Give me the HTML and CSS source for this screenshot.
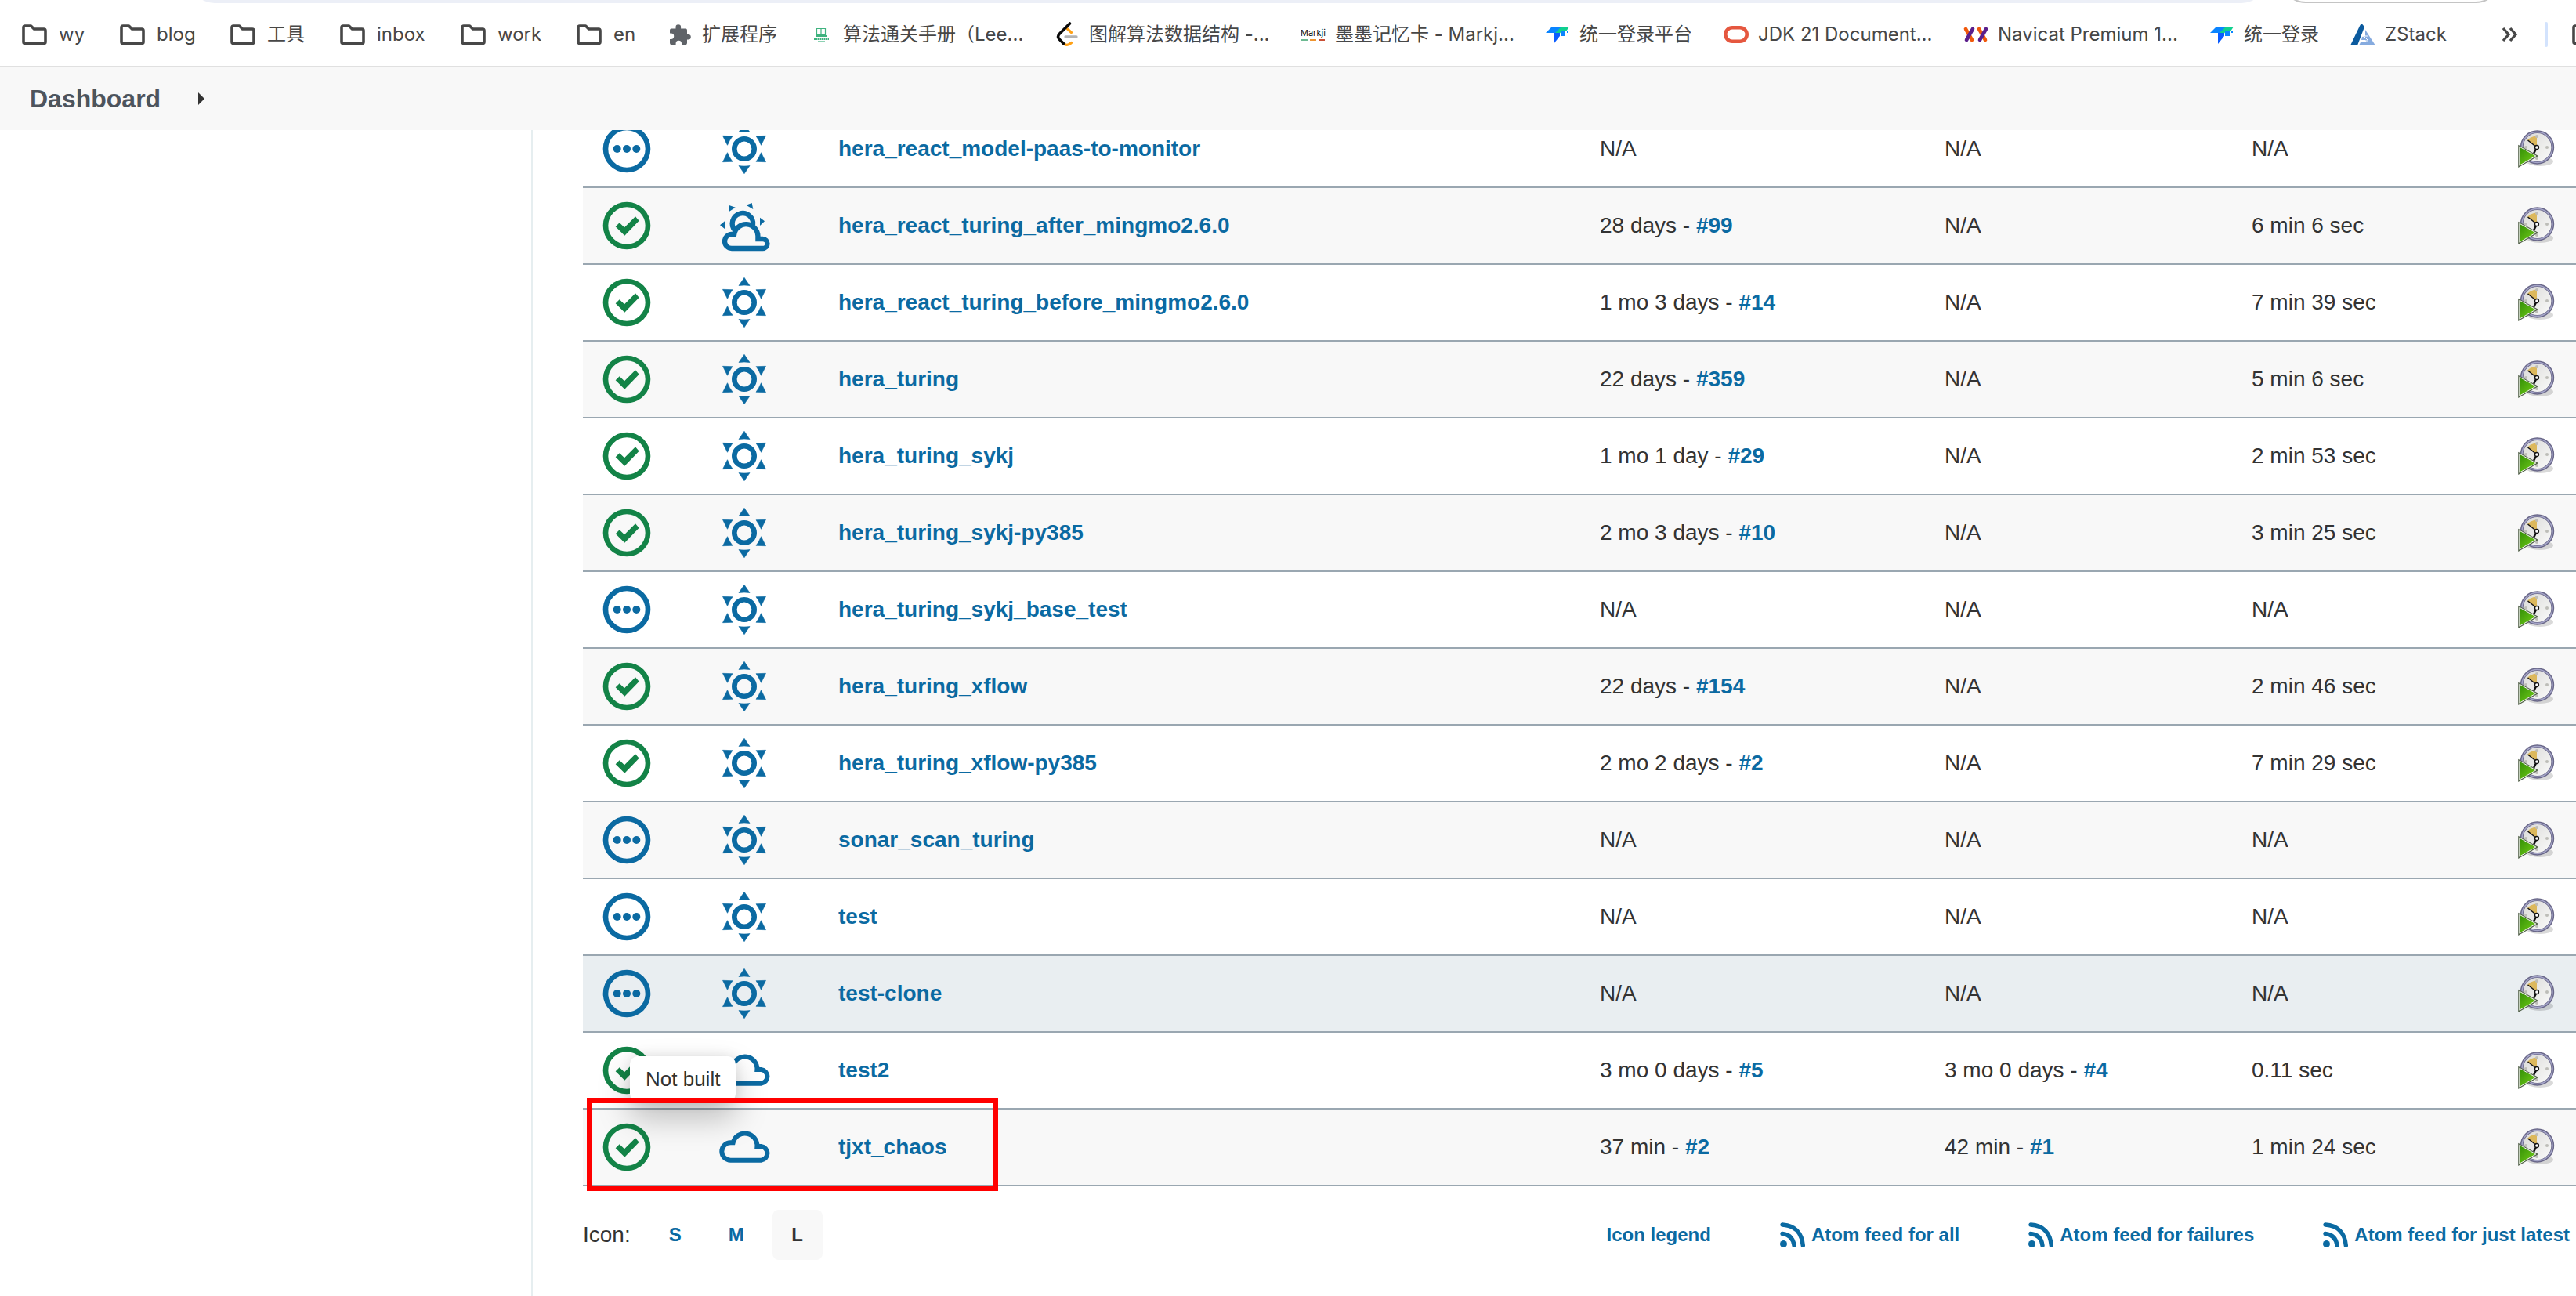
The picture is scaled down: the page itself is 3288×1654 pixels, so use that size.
FILE: index.html
```html
<!DOCTYPE html>
<html lang="en">
<head>
<meta charset="utf-8">
<title>Dashboard [Jenkins]</title>
<link rel="stylesheet" href="styles.css">
</head>
<body>
<svg class="sprite" aria-hidden="true">
  <symbol id="folder" viewBox="0 0 34 32"><path d="M3 7a2 2 0 0 1 2-2h7.500l4 4H29a2 2 0 0 1 2 2v14.500a2 2 0 0 1-2 2H5a2 2 0 0 1-2-2z" fill="none" stroke="#474747" stroke-width="3.600" stroke-linejoin="round"/></symbol>
  <symbol id="tencent" viewBox="0 0 32 32"><path d="M1 14 9 6h13l-8 8z" fill="#0a84ff"/><path d="M13 14 21 6h10l-4 6h-6l-3 4z" fill="#0fd08f"/><path d="M11 14h8v4l-8 10z" fill="#0a5cff"/><path d="M20 12h6v6h-6z" fill="#0a84ff"/><path d="M28 11h2v3h-2z" fill="#0a84ff"/></symbol>
  <symbol id="ok" viewBox="-32 -32 64 64"><circle r="27" fill="none" stroke="#138347" stroke-width="6.600"/><path d="M-14.300 1.300-9.300-3.700-3 2.300 11-11.700l4.700 5.400L-2.700 12.700z" fill="#138347"/></symbol>
  <symbol id="notbuilt" viewBox="-32 -32 64 64"><g fill="#0b6aa2"><circle r="27" fill="none" stroke="#0b6aa2" stroke-width="6.600"/><circle cx="-12.300" r="5"/><circle r="5"/><circle cx="12.300" r="5"/></g></symbol>
  <symbol id="sun" viewBox="-34 -34 68 68"><g fill="#0b6aa2"><circle r="12.700" fill="none" stroke="#0b6aa2" stroke-width="6.600"/><path stroke="#0b6aa2" stroke-width=".6" d="M0-31.700 7-21.500Q0-22.500-7-21.500zM0 31.700 7 21.500Q0 22.500-7 21.500zM-27.500-16.700-15-16.300Q-19-11-21.500-4.700zM27.500-16.700 15-16.300Q19-11 21.500-4.700zM-27.500 16.700-15 16.300Q-19 11-21.500 4.700zM27.500 16.700 15 16.300Q19 11 21.500 4.700z"/></g></symbol>
  <symbol id="partly" viewBox="-34 -34 68 68"><g fill="none" stroke="#0b6aa2" stroke-width="6.300"><path d="M-12 6A13.200 13.200 0 1 1 11-1"/><path d="M-16 29A9 9 0 0 1-16 11H-12.800A15.200 15.200 0 0 1 17.400 13V17H23.500A6 6 0 0 1 23.500 29z"/></g><path fill="#0b6aa2" d="m-19.300-26 8 2.700-7.700 5zM2.300-26.300 9.700-29l1.600 8zM-31-.7l6.300-5.300V4.300zM20-10.300l6 4.600L20 0z"/></symbol>
  <symbol id="cloud" viewBox="-34 -34 68 68"><path d="M-17.500 16.700A11 11 0 0 1-17.500-5.700H-14.300A15.600 15.600 0 0 1 16.400-1H21.500A8.900 8.900 0 0 1 21.500 16.700z" fill="none" stroke="#0b6aa2" stroke-width="6"/></symbol>
  <symbol id="clock" viewBox="0 0 48 48">
    <defs><linearGradient id="play" x1="0" y1="0" x2="1" y2="1"><stop offset="0" stop-color="#2f8a06"/><stop offset="1" stop-color="#7ad61a"/></linearGradient><linearGradient id="face" x1="0" y1="0" x2="1" y2="1"><stop offset="0" stop-color="#d8d8d6"/><stop offset="1" stop-color="#fcfcfb"/></linearGradient></defs>
    <ellipse cx="28" cy="40" rx="17" ry="6" fill="#00000026"/>
    <circle cx="24.500" cy="22" r="19.800" fill="url(#face)" stroke="#6a6889" stroke-width="3.800"/>
    <circle cx="24.500" cy="22" r="19.500" fill="none" stroke="#a4a4c8" stroke-width="1.500"/>
    <path d="M24 21 12 13q4-5 12-5.500z" fill="#dcb85c"/>
    <g fill="#bdbdb8"><circle cx="24" cy="8" r="2"/><circle cx="37" cy="22" r="2"/><circle cx="10" cy="22" r="2"/><circle cx="24" cy="36" r="2"/></g>
    <path d="M12.500 13 24 22" stroke="#111" stroke-width="1.500"/><path d="M24 22 20 30" stroke="#111" stroke-width="2.500"/>
    <circle cx="24" cy="22" r="2.500" fill="#fff" stroke="#111" stroke-width="1.300"/>
    <path d="M1 20v26.500L24.500 33z" fill="url(#play)" stroke="#55634d" stroke-width="1.600"/><path d="M1.800 21.200v24L22.800 33z" fill="none" stroke="#f4f8f0" stroke-width="1"/>
  </symbol>
  <symbol id="rss" viewBox="0 0 32 32"><circle cx="4.500" cy="27.500" r="4.500" fill="#0b6aa2"/><path d="M3 14.500C12 15.500 17 20.500 18 29.500M3 3C19 4 28 13.500 29.300 29.500" fill="none" stroke="#0b6aa2" stroke-width="5.400" stroke-linecap="round"/></symbol>
</svg>

<header>
  <div class="toolbar"><div class="omnibox"></div><div class="profile"></div></div>
  <nav class="bookmarks" aria-label="Bookmarks">
    <a class="folder" href="#"><svg><use href="#folder"/></svg>wy</a>
    <a class="folder" href="#"><svg><use href="#folder"/></svg>blog</a>
    <a class="folder" href="#"><svg><use href="#folder"/></svg>工具</a>
    <a class="folder" href="#"><svg><use href="#folder"/></svg>inbox</a>
    <a class="folder" href="#"><svg><use href="#folder"/></svg>work</a>
    <a class="folder" href="#"><svg><use href="#folder"/></svg>en</a>
    <a href="#"><svg viewBox="0 0 32 32"><path d="M3 10.500a2 2 0 0 1 2-2h5.500V6.500a3.300 3.300 0 0 1 6.600 0v2H23a2 2 0 0 1 2 2v5.500h1.500a3.300 3.300 0 0 1 0 6.600H25V27a2 2 0 0 1-2 2h-5v-1.500a3.700 3.700 0 0 0-7.400 0V29H5a2 2 0 0 1-2-2v-5h1.500a3.700 3.700 0 0 0 0-7.400H3z" fill="#5f6368"/></svg>扩展程序</a>
    <a href="#"><svg viewBox="0 0 32 32"><g fill="none" stroke="#3fb37f"><path d="M10.500 8.500h5.500v8h-5.500zM16 8.500h5.500v8H16z" stroke-width="1.200"/><path d="M9 18h14" stroke-width="2"/><path d="M7 22h19" stroke-width="2" stroke-dasharray="2 .5"/><path d="M12 25h9" stroke-width="1.200"/></g></svg>算法通关手册（Lee...</a>
    <a href="#"><svg viewBox="0 0 32 32"><g fill="none" stroke-linecap="round"><path d="M15 7.500l6.500 6M10 26c4 5 8 4 11.500.500" stroke="#ffa116" stroke-width="3.300"/><path d="M19.500 2 6.500 15c-2.500 2.500-2.500 5 0 7.500l5 5" stroke="#0a0a0a" stroke-width="3.600"/><path d="M14 19h14" stroke="#b3b3b3" stroke-width="3.300"/></g></svg>图解算法数据结构 -...</a>
    <a href="#"><svg viewBox="0 0 32 32"><text x="0" y="18" font-size="11" fill="#111">Markji</text><path d="M1 23h8" stroke="#6dba92" stroke-width="2"/><path d="M12 23h8" stroke="#ee9430" stroke-width="2"/><path d="M23 23h8" stroke="#c94f35" stroke-width="2"/></svg>墨墨记忆卡 - Markj...</a>
    <a href="#"><svg><use href="#tencent"/></svg>统一登录平台</a>
    <a href="#"><svg viewBox="0 0 32 32"><rect x="2.300" y="7.300" width="27.400" height="17.400" rx="8.700" fill="none" stroke="#e5573f" stroke-width="4.600"/></svg>JDK 21 Document...</a>
    <a href="#"><svg viewBox="0 0 32 32"><g stroke-width="4.600" stroke-linecap="round"><path d="M3 9l8 14" stroke="#f0590c"/><path d="M12 9 4 23" stroke="#5a1e8c"/><path d="M20 9l8 14" stroke="#f0590c"/><path d="M29 9l-8 14" stroke="#5a1e8c"/></g></svg>Navicat Premium 1...</a>
    <a href="#"><svg><use href="#tencent"/></svg>统一登录</a>
    <a href="#"><svg viewBox="0 0 32 32"><path d="M12 5q2-5 5 0v4L9 30H0z" fill="#0b5a9e"/><path d="M19 10 32 30H11l2-4h8l-2-3h-5l1-4 4-1z" fill="#86abdf"/><path d="M16 18h6m-9 6h10l-5-5" fill="none" stroke="#fff" stroke-width="1"/></svg>ZStack</a>
    <button type="button" aria-label="More bookmarks"><svg viewBox="0 0 32 32"><path d="M3 8l7 8-7 8M12 8l7 8-7 8" fill="none" stroke="#474747" stroke-width="3.400"/></svg></button>
    <span class="divider"></span>
    <a class="folder" href="#" aria-label="All bookmarks"><svg><use href="#folder"/></svg></a>
  </nav>
</header>

<nav class="breadcrumbs" aria-label="Breadcrumbs"><a href="#">Dashboard</a><svg viewBox="0 0 8 16"><path d="M0 0l8 8-8 8z" fill="#333"/></svg></nav>

<div class="page">
  <aside></aside>
  <main>
    <div class="jobs">
      <table>
        <colgroup><col class="c-status"><col class="c-weather"><col><col class="c-success"><col class="c-failure"><col class="c-duration"><col class="c-run"></colgroup>
        <tbody>
          <tr><td><svg><use href="#notbuilt"/></svg></td><td><svg class="w"><use href="#sun"/></svg></td><td><a href="#">hera_react_model-paas-to-monitor</a></td><td>N/A</td><td>N/A</td><td>N/A</td><td><button type="button" aria-label="Schedule a build"><svg><use href="#clock"/></svg></button></td></tr>
          <tr><td><svg><use href="#ok"/></svg></td><td><svg class="w"><use href="#partly"/></svg></td><td><a href="#">hera_react_turing_after_mingmo2.6.0</a></td><td>28 days - <a href="#">#99</a></td><td>N/A</td><td>6 min 6 sec</td><td><button type="button" aria-label="Schedule a build"><svg><use href="#clock"/></svg></button></td></tr>
          <tr><td><svg><use href="#ok"/></svg></td><td><svg class="w"><use href="#sun"/></svg></td><td><a href="#">hera_react_turing_before_mingmo2.6.0</a></td><td>1 mo 3 days - <a href="#">#14</a></td><td>N/A</td><td>7 min 39 sec</td><td><button type="button" aria-label="Schedule a build"><svg><use href="#clock"/></svg></button></td></tr>
          <tr><td><svg><use href="#ok"/></svg></td><td><svg class="w"><use href="#sun"/></svg></td><td><a href="#">hera_turing</a></td><td>22 days - <a href="#">#359</a></td><td>N/A</td><td>5 min 6 sec</td><td><button type="button" aria-label="Schedule a build"><svg><use href="#clock"/></svg></button></td></tr>
          <tr><td><svg><use href="#ok"/></svg></td><td><svg class="w"><use href="#sun"/></svg></td><td><a href="#">hera_turing_sykj</a></td><td>1 mo 1 day - <a href="#">#29</a></td><td>N/A</td><td>2 min 53 sec</td><td><button type="button" aria-label="Schedule a build"><svg><use href="#clock"/></svg></button></td></tr>
          <tr><td><svg><use href="#ok"/></svg></td><td><svg class="w"><use href="#sun"/></svg></td><td><a href="#">hera_turing_sykj-py385</a></td><td>2 mo 3 days - <a href="#">#10</a></td><td>N/A</td><td>3 min 25 sec</td><td><button type="button" aria-label="Schedule a build"><svg><use href="#clock"/></svg></button></td></tr>
          <tr><td><svg><use href="#notbuilt"/></svg></td><td><svg class="w"><use href="#sun"/></svg></td><td><a href="#">hera_turing_sykj_base_test</a></td><td>N/A</td><td>N/A</td><td>N/A</td><td><button type="button" aria-label="Schedule a build"><svg><use href="#clock"/></svg></button></td></tr>
          <tr><td><svg><use href="#ok"/></svg></td><td><svg class="w"><use href="#sun"/></svg></td><td><a href="#">hera_turing_xflow</a></td><td>22 days - <a href="#">#154</a></td><td>N/A</td><td>2 min 46 sec</td><td><button type="button" aria-label="Schedule a build"><svg><use href="#clock"/></svg></button></td></tr>
          <tr><td><svg><use href="#ok"/></svg></td><td><svg class="w"><use href="#sun"/></svg></td><td><a href="#">hera_turing_xflow-py385</a></td><td>2 mo 2 days - <a href="#">#2</a></td><td>N/A</td><td>7 min 29 sec</td><td><button type="button" aria-label="Schedule a build"><svg><use href="#clock"/></svg></button></td></tr>
          <tr><td><svg><use href="#notbuilt"/></svg></td><td><svg class="w"><use href="#sun"/></svg></td><td><a href="#">sonar_scan_turing</a></td><td>N/A</td><td>N/A</td><td>N/A</td><td><button type="button" aria-label="Schedule a build"><svg><use href="#clock"/></svg></button></td></tr>
          <tr><td><svg><use href="#notbuilt"/></svg></td><td><svg class="w"><use href="#sun"/></svg></td><td><a href="#">test</a></td><td>N/A</td><td>N/A</td><td>N/A</td><td><button type="button" aria-label="Schedule a build"><svg><use href="#clock"/></svg></button></td></tr>
          <tr class="active"><td><svg><use href="#notbuilt"/></svg></td><td><svg class="w"><use href="#sun"/></svg></td><td><a href="#">test-clone</a></td><td>N/A</td><td>N/A</td><td>N/A</td><td><button type="button" aria-label="Schedule a build"><svg><use href="#clock"/></svg></button></td></tr>
          <tr><td><svg><use href="#ok"/></svg></td><td><svg class="w"><use href="#cloud"/></svg></td><td><a href="#">test2</a></td><td>3 mo 0 days - <a href="#">#5</a></td><td>3 mo 0 days - <a href="#">#4</a></td><td>0.11 sec</td><td><button type="button" aria-label="Schedule a build"><svg><use href="#clock"/></svg></button></td></tr>
          <tr><td><svg><use href="#ok"/></svg></td><td><svg class="w"><use href="#cloud"/></svg></td><td><a href="#">tjxt_chaos</a></td><td>37 min - <a href="#">#2</a></td><td>42 min - <a href="#">#1</a></td><td>1 min 24 sec</td><td><button type="button" aria-label="Schedule a build"><svg><use href="#clock"/></svg></button></td></tr>
        </tbody>
      </table>
      <div class="tooltip" role="tooltip">Not built</div>
      <div class="highlight"></div>
    </div>
    <footer>
      <div class="sizes"><span>Icon:</span><div class="choices"><button type="button">S</button><button type="button">M</button><button type="button" class="selected">L</button></div></div>
      <div class="feeds"><a href="#">Icon legend</a><a href="#"><svg><use href="#rss"/></svg>Atom feed for all</a><a href="#"><svg><use href="#rss"/></svg>Atom feed for failures</a><a href="#"><svg><use href="#rss"/></svg>Atom feed for just latest</a></div>
    </footer>
  </main>
</div>
</body>
</html>
```
FILE: styles.css
```css
* { box-sizing: border-box; }

body {
  margin: 0;
  min-height: 100vh;
  display: flex;
  flex-direction: column;
  background: #fff;
  color: #333;
  font: 28px/36px "Liberation Sans", Arial, sans-serif;
}

a { color: #0b6aa2; font-weight: bold; text-decoration: none; }
button { display: block; border: 0; padding: 0; background: none; font: inherit; color: inherit; }
svg { display: block; flex: none; overflow: visible; }
.sprite { position: absolute; width: 0; height: 0; }

/* browser chrome */
header { border-bottom: 2px solid #e0e0e0; overflow: hidden; }
.toolbar {
  display: flex;
  align-items: flex-end;
  gap: 18px;
  height: 4px;
  overflow: hidden;
  padding: 0 96px 0 242px;
}
.omnibox { flex: 1; height: 64px; border-radius: 32px; background: #eceff7; }
.profile { width: 281px; height: 64px; border: 2px solid #c4c4c4; border-radius: 32px; }
.bookmarks {
  display: grid;
  grid-template-columns: 125px 141px 140px 154px 148px 117px 180px 314px 314px 312px 228px 306px 314px 180px 192px 56px 34px 34px;
  align-items: center;
  height: 80px;
  padding-left: 27px;
  font: 24px/32px Inter, "Noto Sans CJK SC", sans-serif;
}
.bookmarks a {
  display: flex;
  align-items: center;
  gap: 12px;
  color: #474747;
  font-weight: normal;
  white-space: nowrap;
}
.bookmarks .folder { gap: 14px; }
.bookmarks svg { width: 32px; height: 32px; }
.bookmarks .folder svg { width: 34px; }
.divider { width: 4px; height: 32px; border-radius: 2px; background: #d3e3fd; }

.breadcrumbs {
  display: flex;
  align-items: center;
  gap: 48px;
  height: 80px;
  padding: 0 38px;
  background: #f8f8f8;
}
.breadcrumbs a { color: #4d545d; font-size: 32px; }
.breadcrumbs svg { width: 8px; height: 16px; }

/* page body */
.page { flex: 1; display: flex; overflow: hidden; }
aside { width: 680px; flex: none; border-right: 2px solid #e6eef0; }
main { flex: 1; min-width: 0; padding-left: 64px; }

/* the list is scrolled a little way under the breadcrumb bar */
.jobs { position: relative; margin-top: -24px; }
table { width: 100%; table-layout: fixed; border-collapse: separate; border-spacing: 0; }
.c-status { width: 112px; }
.c-weather { width: 188px; }
.c-success { width: 440px; }
.c-failure { width: 392px; }
.c-duration { width: 340px; }
.c-run { width: 100px; }
td { height: 98px; padding: 0 0 0 26px; border-bottom: 2px solid #9aa7b1; white-space: nowrap; }
td:nth-child(-n+2) { padding: 0; }
td:nth-child(-n+2) svg { margin: 0 auto; width: 64px; height: 64px; }
td:nth-child(-n+2) .w { width: 68px; height: 68px; }
td button svg { width: 48px; height: 48px; }
tr:nth-child(even) td { background: #f8f8f8; }
tr.active td { background: #e9eef1; }

.tooltip {
  position: absolute;
  left: 60px;
  bottom: 108px;
  padding: 11px 20px;
  border-radius: 10px;
  background: #fff;
  box-shadow: 0 0 16px rgba(0, 0, 0, .1), 0 20px 40px rgba(0, 0, 0, .25);
  font-size: 26px;
}
.highlight {
  position: absolute;
  left: 5px;
  bottom: -6px;
  width: 525px;
  height: 119px;
  border: 7px solid #f00;
}

footer {
  display: flex;
  align-items: center;
  justify-content: space-between;
  padding: 30px 8px 30px 0;
}
.sizes { display: flex; align-items: center; gap: 25px; }
.choices { display: flex; gap: 14px; }
.choices button {
  width: 64px;
  height: 64px;
  border-radius: 8px;
  color: #0b6aa2;
  font-size: 24px;
  font-weight: bold;
}
.choices .selected { background: #f8f8f8; color: #333; }
.feeds { display: flex; gap: 88px; font-size: 24px; }
.feeds a { display: flex; align-items: center; gap: 8px; }
.feeds svg { width: 32px; height: 32px; }
```
